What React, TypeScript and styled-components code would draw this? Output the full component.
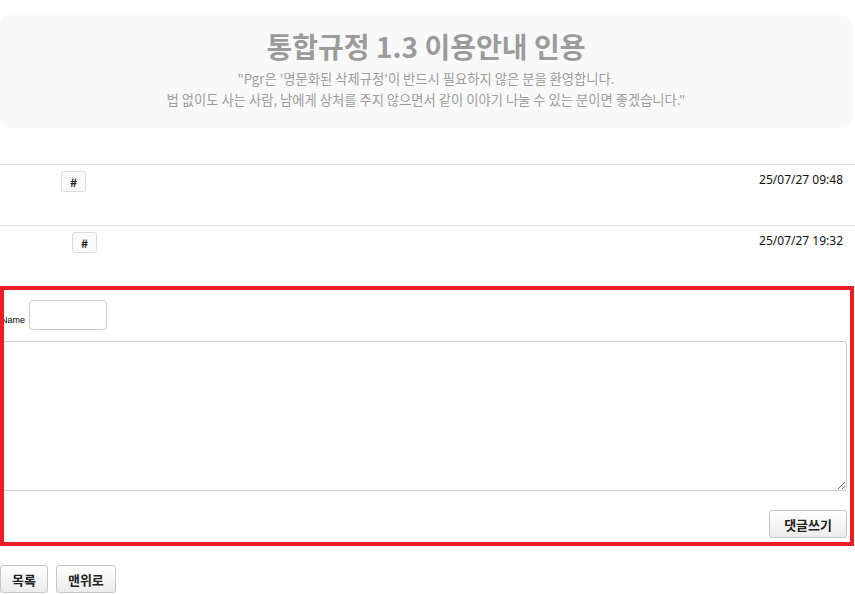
import React from 'react'
import styled, { createGlobalStyle } from 'styled-components'

const GlobalStyle = createGlobalStyle`
  html, body {
    margin: 0;
    padding: 0;
    background: #fff;
  }
  body {
    font-family: "Noto Sans CJK KR", "Noto Sans", sans-serif;
    color: #000;
  }
`

const Page = styled.div`
  width: 855px;
  padding-top: 15px;
`

/* Header */
const Notice = styled.div`
  width: 852px;
  box-sizing: border-box;
  background: #f9f9f9;
  border-radius: 10px;
  padding: 13px 0 18px;
  text-align: center;
`

const Title = styled.h1`
  margin: 0;
  font-size: 28px;
  line-height: 36px;
  font-weight: 700;
  color: #9b9b9b;
`

const Lead = styled.p`
  margin: 4px 0 0;
  font-size: 13.3px;
  line-height: 21px;
  color: #9d9d9d;
`

/* Comment list */
const List = styled.div`
  margin-top: 36px;
`

const Row = styled.div`
  display: flex;
  justify-content: space-between;
  align-items: flex-start;
  height: 61px;
  box-sizing: border-box;
  border-top: 1px solid #dddddd;
  padding: 6px 12px 0 0;
`

const Anchor = styled.a<{ $indent: number }>`
  display: inline-flex;
  align-items: center;
  justify-content: center;
  margin-left: ${p => p.$indent}px;
  width: 25px;
  height: 21px;
  box-sizing: border-box;
  border: 1px solid #dcdcdc;
  border-radius: 3px;
  background: #fafafa;
  font-size: 12px;
  font-weight: 700;
  color: #222;
  text-decoration: none;
`

const Stamp = styled.span`
  font-family: "Noto Sans", "Noto Sans CJK KR", sans-serif;
  font-size: 12px;
  font-weight: 400;
  line-height: 16px;
  padding-top: 1px;
  color: #111;
`

/* Comment form */
const Form = styled.form`
  position: relative;
  width: 854px;
  height: 260px;
  box-sizing: border-box;
  padding-top: 14px;

  &::after {
    content: '';
    position: absolute;
    inset: 0;
    border: 4px solid #ee1c25;
    pointer-events: none;
  }
`

const NameRow = styled.div`
  display: flex;
  align-items: center;
  gap: 4px;
  padding-left: 1px;
`

const Label = styled.label`
  font-size: 9px;
  line-height: 10px;
  padding-top: 10px;
  font-family: "Liberation Sans", Arial, sans-serif;
`

const NameInput = styled.input`
  width: 78px;
  height: 30px;
  box-sizing: border-box;
  border: 1px solid #cccccc;
  border-radius: 4px;
  background: #fff;
  outline: none;
`

const Body = styled.textarea`
  display: block;
  margin-top: 11px;
  width: 847px;
  height: 150px;
  box-sizing: border-box;
  border: 1px solid #cccccc;
  border-radius: 0 3px 3px 0;
  background: #fff;
  outline: none;
  resize: both;
`

const Actions = styled.div`
  display: flex;
  justify-content: flex-end;
  width: 847px;
  margin-top: 19px;
`

const Button = styled.button<{ $wide?: boolean }>`
  height: 28px;
  padding: 0 ${p => (p.$wide ? 14 : 11)}px;
  box-sizing: border-box;
  border: 1px solid #c7c7c7;
  border-radius: 3px;
  background: linear-gradient(#ffffff, #ececec);
  font-family: "Noto Sans CJK KR", sans-serif;
  font-size: 13px;
  font-weight: 700;
  color: #222;
  cursor: pointer;
`

const Footer = styled.div`
  display: flex;
  gap: 8px;
  margin-top: 19px;
`

const comments = [
  { id: 1, indent: 61, time: '25/07/27 09:48' },
  { id: 2, indent: 72, time: '25/07/27 19:32' },
]

export default function App() {
  return (
    <Page>
      <GlobalStyle />
      <Notice>
        <Title>통합규정 1.3 이용안내 인용</Title>
        <Lead>
          "Pgr은 '명문화된 삭제규정'이 반드시 필요하지 않은 분을 환영합니다.
          <br />
          법 없이도 사는 사람, 남에게 상처를 주지 않으면서 같이 이야기 나눌 수 있는 분이면 좋겠습니다."
        </Lead>
      </Notice>

      <List>
        {comments.map(c => (
          <Row key={c.id}>
            <Anchor href="#" $indent={c.indent}>#</Anchor>
            <Stamp>{c.time}</Stamp>
          </Row>
        ))}
      </List>

      <Form onSubmit={e => e.preventDefault()}>
        <NameRow>
          <Label htmlFor="name">Name</Label>
          <NameInput id="name" type="text" />
        </NameRow>
        <Body />
        <Actions>
          <Button type="submit" $wide>댓글쓰기</Button>
        </Actions>
      </Form>

      <Footer>
        <Button type="button">목록</Button>
        <Button type="button">맨위로</Button>
      </Footer>
    </Page>
  )
}
